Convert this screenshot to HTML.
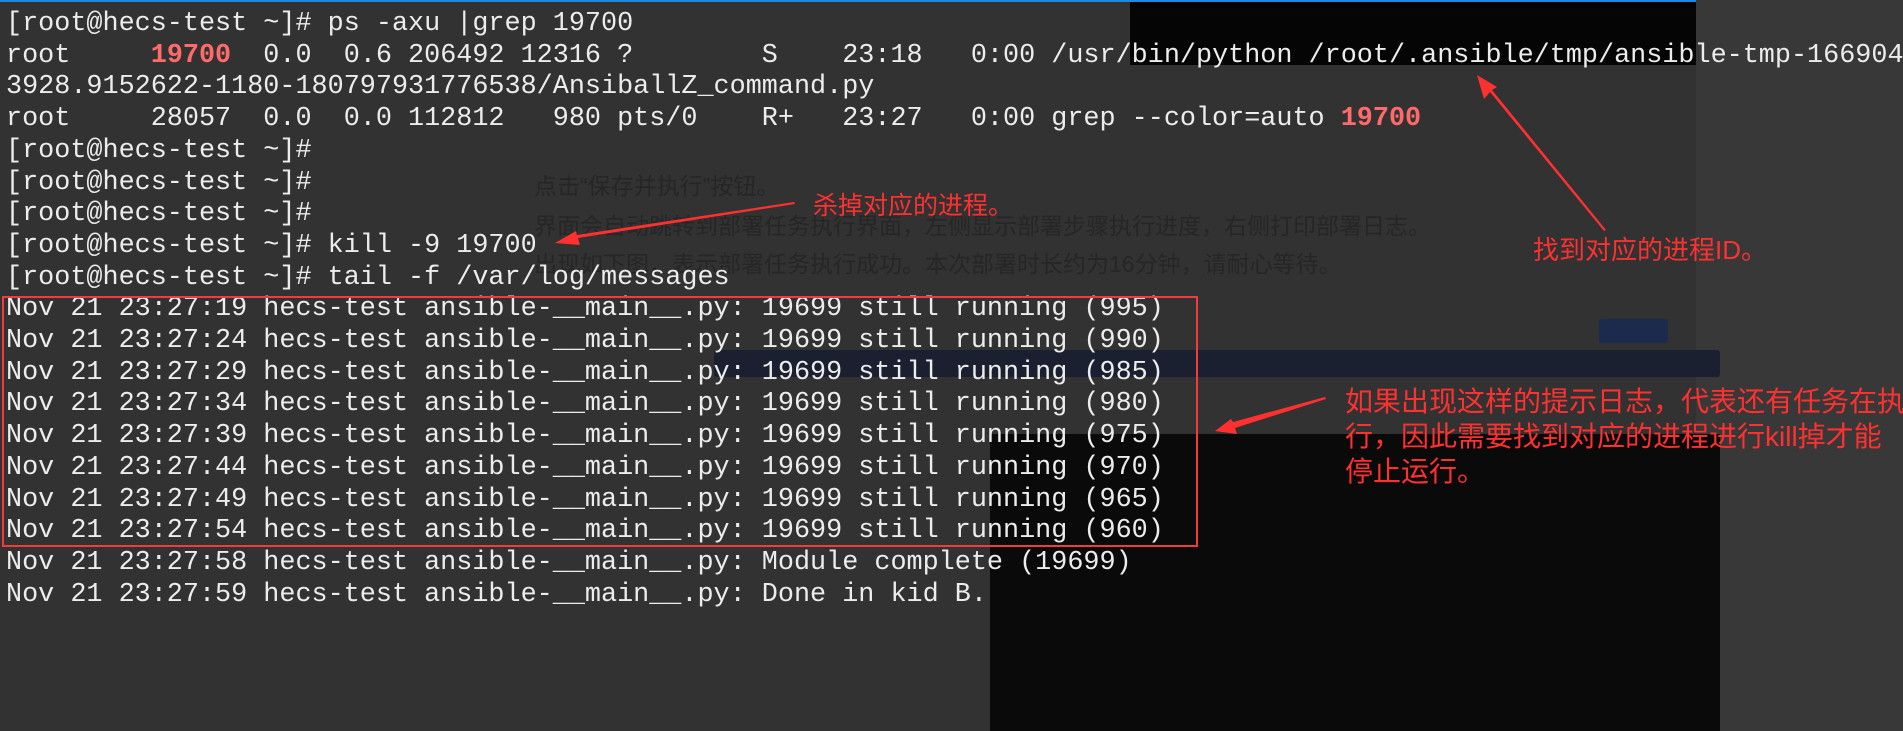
<!DOCTYPE html>
<html><head><meta charset="utf-8"><style>
html,body{margin:0;padding:0}
body{width:1903px;height:731px;overflow:hidden;background:#323232;position:relative;font-family:"Liberation Mono","DejaVu Sans Mono",monospace}
.abs{position:absolute}
.term{position:absolute;left:6px;top:9px;font-size:26.8px;line-height:31.7px;color:#ececec;white-space:pre;letter-spacing:0}
.r{color:#ff6b6b;font-weight:bold}
.faint{position:absolute;font-family:"Liberation Sans","Noto Sans CJK SC",sans-serif;color:#262626;white-space:nowrap}
.ann{position:absolute;font-family:"Liberation Sans","Noto Sans CJK SC",sans-serif;color:#ff3030;white-space:nowrap}
</style></head><body>
<div class="abs" style="left:0;top:0;width:1696px;height:2px;background:#1e88e5"></div>
<div class="abs" style="left:1130px;top:2px;width:566px;height:63px;background:#050505"></div>
<div class="abs" style="left:1696px;top:0;width:207px;height:731px;background:#383838"></div>
<div class="abs" style="left:714px;top:350px;width:1006px;height:27px;background:#1b2030;border-radius:3px"></div>
<div class="abs" style="left:1599px;top:319px;width:69px;height:24px;background:#1c2a4e;border-radius:3px"></div>
<div class="abs" style="left:990px;top:434px;width:730px;height:297px;background:#0a0a0a"></div>
<div class="faint" style="left:534px;top:167px;font-size:23px">点击“保存并执行”按钮。</div>
<div class="faint" style="left:534px;top:207px;font-size:23px">界面会自动跳转到部署任务执行界面，左侧显示部署步骤执行进度，右侧打印部署日志。</div>
<div class="faint" style="left:534px;top:245px;font-size:23px">出现如下图，表示部署任务执行成功。本次部署时长约为16分钟，请耐心等待。</div>
<div class="term">[root@hecs-test ~]# ps -axu |grep 19700
root     <span class="r">19700</span>  0.0  0.6 206492 12316 ?        S    23:18   0:00 /usr/bin/python /root/.ansible/tmp/ansible-tmp-166904
3928.9152622-1180-180797931776538/AnsiballZ_command.py
root     28057  0.0  0.0 112812   980 pts/0    R+   23:27   0:00 grep --color=auto <span class="r">19700</span>
[root@hecs-test ~]#
[root@hecs-test ~]#
[root@hecs-test ~]#
[root@hecs-test ~]# kill -9 19700
[root@hecs-test ~]# tail -f /var/log/messages
Nov 21 23:27:19 hecs-test ansible-__main__.py: 19699 still running (995)
Nov 21 23:27:24 hecs-test ansible-__main__.py: 19699 still running (990)
Nov 21 23:27:29 hecs-test ansible-__main__.py: 19699 still running (985)
Nov 21 23:27:34 hecs-test ansible-__main__.py: 19699 still running (980)
Nov 21 23:27:39 hecs-test ansible-__main__.py: 19699 still running (975)
Nov 21 23:27:44 hecs-test ansible-__main__.py: 19699 still running (970)
Nov 21 23:27:49 hecs-test ansible-__main__.py: 19699 still running (965)
Nov 21 23:27:54 hecs-test ansible-__main__.py: 19699 still running (960)
Nov 21 23:27:58 hecs-test ansible-__main__.py: Module complete (19699)
Nov 21 23:27:59 hecs-test ansible-__main__.py: Done in kid B.</div>
<div class="abs" style="left:2px;top:296px;width:1192px;height:247px;border:2px solid #f03c3c"></div>
<div class="ann" style="left:813px;top:186px;font-size:25px">杀掉对应的进程。</div>
<div class="ann" style="left:1533px;top:230px;font-size:26px">找到对应的进程ID。</div>
<div class="ann" style="left:1345px;top:384px;font-size:28px;line-height:35px">如果出现这样的提示日志，代表还有任务在执<br>行，因此需要找到对应的进程进行kill掉才能<br>停止运行。</div>
<svg class="abs" style="left:0;top:0" width="1903" height="731">
<g fill="#ff3030">
<polygon points="1606,230 1604,231 1490,92 1484,99 1477,75 1497,87 1492,90"/>
<polygon points="794,202 795,204 578,238 580,245 555,243 576,231 577,235"/>
<polygon points="1325,397 1326,399 1235,428 1237,434 1215,431 1231,419 1233,422"/>
</g>
</svg>
</body></html>
